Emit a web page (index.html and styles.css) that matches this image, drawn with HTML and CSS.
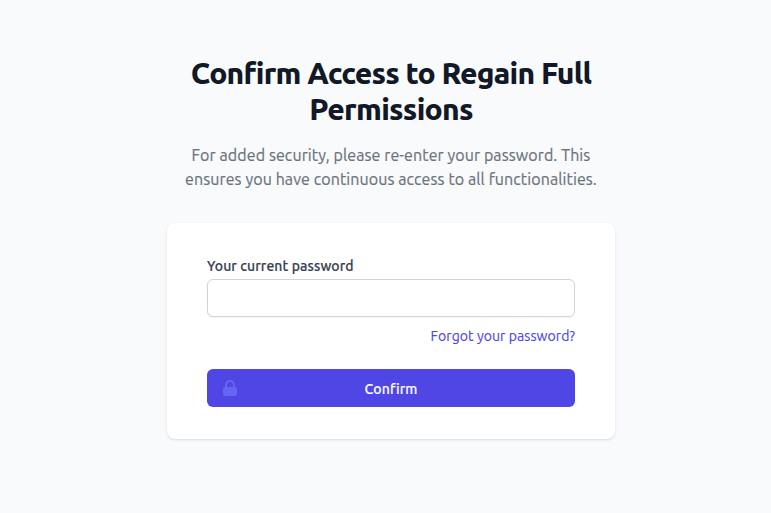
FILE: index.html
```html
<!DOCTYPE html>
<html lang="en">
<head>
<meta charset="utf-8">
<title>Confirm Access</title>
<link rel="stylesheet" href="styles.css">
</head>
<body>
<main class="page">
  <header class="intro">
    <h1 class="title">Confirm Access to Regain Full<br>Permissions</h1>
    <p class="lead">For added security, please re-enter your password. This<br>ensures you have continuous access to all functionalities.</p>
  </header>
  <form class="card">
    <label class="label" for="password">Your current password</label>
    <input class="input" id="password" type="password">
    <div class="forgot"><a class="link" href="#">Forgot your password?</a></div>
    <button class="button" type="submit">
      <svg class="lock" viewBox="0 0 20 20" fill="currentColor" aria-hidden="true"><path fill-rule="evenodd" d="M5 9V7a5 5 0 0110 0v2a2 2 0 012 2v5a2 2 0 01-2 2H5a2 2 0 01-2-2v-5a2 2 0 012-2zm8-2v2H7V7a3 3 0 016 0z" clip-rule="evenodd"/></svg>
      <span class="button-text">Confirm</span>
    </button>
  </form>
</main>
</body>
</html>
```

FILE: styles.css
```css
* { box-sizing: border-box; }
body { margin: 0; min-height: 513px; background: #f9fafb; font-family: Ubuntu, "Open Sans", "Noto Sans", sans-serif; }
.page { width: 448px; margin-left: 167px; padding-top: 55px; }
.intro { text-align: center; white-space: nowrap; }
.title { margin: 0; font-size: 30px; line-height: 36px; font-weight: 800; letter-spacing: -0.75px; color: #111827; }
.lead { margin: 16px 0 0; font-size: 16px; line-height: 24px; letter-spacing: 0.1px; -webkit-text-stroke: 0.2px currentColor; color: #6b7280; }
.card { margin-top: 32px; padding: 33px 40px 32px; height: 216px; background: #fff; border-radius: 8px; box-shadow: 0 1px 3px rgba(0,0,0,.1), 0 1px 2px -1px rgba(0,0,0,.1); }
.label { display: block; font-size: 14px; line-height: 20px; font-weight: 500; letter-spacing: 0.1px; -webkit-text-stroke: 0.2px currentColor; color: #374151; }
.input { display: block; width: 100%; height: 38px; margin: 3px 0 0; padding: 8px 12px; border: 1px solid #d1d5db; border-radius: 6px; background: #fff; box-shadow: 0 1px 2px rgba(0,0,0,.05); }
.forgot { margin-top: 9px; text-align: right; font-size: 14px; line-height: 20px; letter-spacing: 0.08px; -webkit-text-stroke: 0.15px #4f46e5; }
.link { color: #4f46e5; text-decoration: none; }
.button { display: grid; grid-template-columns: 20px 1fr 20px; align-items: center; width: 100%; height: 38px; margin: 23px 0 0; padding: 0 13px; border: 0; border-radius: 6px; background: #4f46e5; color: #fff; font: 500 14px/20px Ubuntu, "Open Sans", "Noto Sans", sans-serif; letter-spacing: 0.15px; -webkit-text-stroke: 0.15px #fff; }
.button-text { padding-top: 2px; }
.lock { width: 20px; height: 20px; color: #6366f1; }
```
